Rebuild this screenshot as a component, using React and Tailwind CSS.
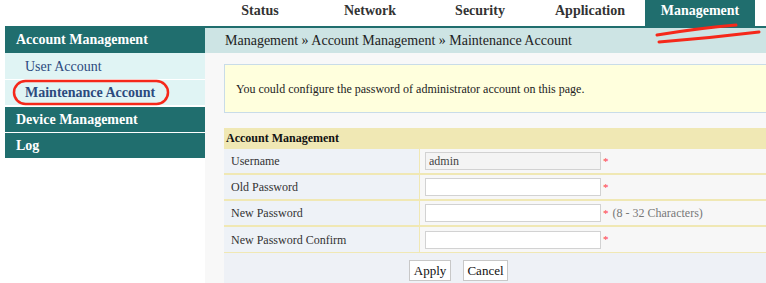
import React from 'react';

const tabs = ['Status', 'Network', 'Security', 'Application', 'Management'];

const fields = [
    { label: 'Username', value: 'admin', disabled: true },
    { label: 'Old Password' },
    { label: 'New Password', hint: '(8 - 32 Characters)' },
    { label: 'New Password Confirm' },
];

const App = () => {
    return (
        <div className="relative w-[766px] h-[283px] overflow-hidden bg-white font-['Liberation_Serif',serif] text-[#222]">
            {/* Top tabs */}
            <div className="flex h-[26px]">
                <div className="w-[205px] shrink-0"></div>
                {tabs.map((t) => (
                    <div
                        key={t}
                        className={`w-[110px] shrink-0 text-center text-[14px] font-bold leading-[22px] ${
                            t === 'Management' ? 'bg-[#206e6e] text-white' : 'text-[#333]'
                        }`}
                    >
                        {t}
                    </div>
                ))}
            </div>

            <div className="flex">
                {/* Sidebar */}
                <div className="w-[200px] ml-[5px] shrink-0">
                    <div className="h-[27px] bg-[#206e6e] text-white font-bold text-[14px] leading-[27px] pl-[11px]">
                        Account Management
                    </div>
                    <div className="h-[27px] bg-[#e0f4f4] border-b border-white text-[#2c4a7e] text-[14px] leading-[28px] pl-[20px]">
                        User Account
                    </div>
                    <div className="h-[27px] bg-[#e0f4f4] border-b-2 border-white text-[#2c4a7e] font-bold text-[14px] leading-[26px] pl-[20px]">
                        Maintenance Account
                    </div>
                    <div className="h-[26px] bg-[#206e6e] border-b border-white text-white font-bold text-[14px] leading-[25px] pl-[11px]">
                        Device Management
                    </div>
                    <div className="h-[25px] bg-[#206e6e] text-white font-bold text-[14px] leading-[25px] pl-[11px]">
                        Log
                    </div>
                </div>

                {/* Main */}
                <div className="w-[600px] shrink-0 flex flex-col">
                    <div className="border-t-2 border-[#206e6e] h-[27px] bg-[#cde4e4] text-[14px] leading-[25px] pl-[20px] text-[#222]">
                        Management » Account Management » Maintenance Account
                    </div>
                    <div className="bg-[#f8f8f8] h-[240px] pl-[19px] pt-[11px]">
                        <div className="h-[49px] bg-[#ffffdd] border border-[#c9dce8] flex items-center pl-[11px] text-[12px] text-[#222]">
                            You could configure the password of administrator account on this page.
                        </div>

                        <div className="mt-[15px]">
                            <div className="h-[21px] bg-[#f0e8b4] pl-[2px] text-[12px] font-bold leading-[21px] text-[#111]">
                                Account Management
                            </div>
                            {fields.map((f, i) => (
                                <div
                                    key={f.label}
                                    className={`flex h-[26px] border-[#f0e8b4] ${i === fields.length - 1 ? 'border-b h-[25px]' : 'border-b-2'}`}
                                >
                                    <div className="w-[196px] shrink-0 bg-[#eef2f7] border-r border-[#f0e8b4] pl-[7px] text-[12px] text-[#333] flex items-center">
                                        {f.label}
                                    </div>
                                    <div className="flex-1 bg-[#f7f7f7] pl-[5px] flex items-center">
                                        <input
                                            type="text"
                                            defaultValue={f.value || ''}
                                            readOnly={f.disabled}
                                            className={`w-[176px] h-[18px] border border-[#d2d2d2] px-[3px] text-[12px] text-[#444] outline-none font-['Liberation_Serif',serif] ${
                                                f.disabled ? 'bg-[#f4f4f4]' : 'bg-white'
                                            }`}
                                        />
                                        <span className="ml-[2px] text-[#ff3a4a] text-[11px] leading-none">*</span>
                                        {f.hint && (
                                            <span className="ml-[4px] text-[12px] text-[#777]">{f.hint}</span>
                                        )}
                                    </div>
                                </div>
                            ))}
                            <div className="h-[40px] bg-[#eef1f6] pl-[185px] pt-[7px] flex items-start gap-[12px]">
                                <button className="w-[42px] h-[21px] bg-white border border-[#c8c8c8] text-[13px] text-[#111] leading-none">
                                    Apply
                                </button>
                                <button className="w-[45px] h-[21px] bg-white border border-[#c8c8c8] text-[13px] text-[#111] leading-none">
                                    Cancel
                                </button>
                            </div>
                        </div>
                    </div>
                </div>
            </div>

            {/* Red annotations */}
            <svg className="absolute inset-0 pointer-events-none" width="766" height="283">
                <rect
                    x="14"
                    y="81"
                    width="154"
                    height="23"
                    rx="11.5"
                    fill="none"
                    stroke="#f5281a"
                    strokeWidth="2.5"
                />
                <path d="M657 35 Q700 28 736 25" fill="none" stroke="#f5281a" strokeWidth="3" strokeLinecap="round" />
                <path d="M659 42 Q710 38 759 32" fill="none" stroke="#f5281a" strokeWidth="3" strokeLinecap="round" />
            </svg>
        </div>
    );
};

export default App;
